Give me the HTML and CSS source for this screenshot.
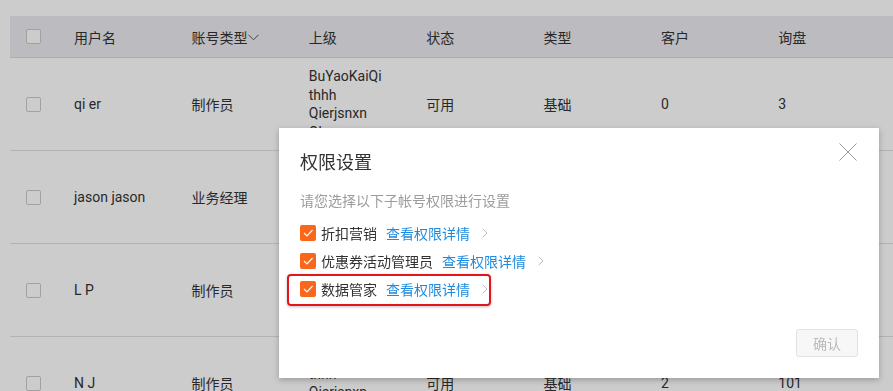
FILE: index.html
```html
<!DOCTYPE html>
<html lang="zh-CN">
<head>
  <meta charset="UTF-8">
  <meta name="viewport" content="width=device-width, initial-scale=1.0">
  <title>子帐号管理</title>
  <link rel="stylesheet" href="styles.css">
</head>
<body>
  <div class="page">
    <div class="table">
      <div class="row head">
        <div class="cell"><span class="box"></span></div>
        <div class="cell">用户名</div>
        <div class="cell">账号类型<svg class="sort" width="11" height="7" viewBox="0 0 11 7"><path d="M0.5 0.8 L5.5 5.8 L10.5 0.8" fill="none" stroke="#555" stroke-width="1"/></svg></div>
        <div class="cell">上级</div>
        <div class="cell">状态</div>
        <div class="cell">类型</div>
        <div class="cell">客户</div>
        <div class="cell">询盘</div>
        <div class="cell"></div>
      </div>

      <div class="row">
        <div class="cell"><span class="box"></span></div>
        <div class="cell">qi er</div>
        <div class="cell">制作员</div>
        <div class="cell lines">BuYaoKaiQi<br>thhh<br>Qierjsnxn<br>Qkw</div>
        <div class="cell">可用</div>
        <div class="cell">基础</div>
        <div class="cell">0</div>
        <div class="cell">3</div>
        <div class="cell"></div>
      </div>

      <!-- rows 2 and 3 sit under the dialog, only the first columns show -->
      <div class="row">
        <div class="cell"><span class="box"></span></div>
        <div class="cell">jason jason</div>
        <div class="cell">业务经理</div>
        <div class="cell"></div>
        <div class="cell"></div>
        <div class="cell"></div>
        <div class="cell"></div>
        <div class="cell"></div>
        <div class="cell"></div>
      </div>

      <div class="row">
        <div class="cell"><span class="box"></span></div>
        <div class="cell">L P</div>
        <div class="cell">制作员</div>
        <div class="cell"></div>
        <div class="cell"></div>
        <div class="cell"></div>
        <div class="cell"></div>
        <div class="cell"></div>
        <div class="cell"></div>
      </div>

      <div class="row">
        <div class="cell"><span class="box"></span></div>
        <div class="cell">N J</div>
        <div class="cell">制作员</div>
        <div class="cell lines">BuYaoKaiQi<br>thhh<br>Qierjsnxn<br>Qkw</div>
        <div class="cell">可用</div>
        <div class="cell">基础</div>
        <div class="cell">2</div>
        <div class="cell">101</div>
        <div class="cell"></div>
      </div>
    </div>
  </div>

  <div class="mask"></div>

  <div class="modal">
    <svg class="close" width="18" height="18" viewBox="0 0 18 18"><path d="M0.5 0.5 L17.5 17.5 M17.5 0.5 L0.5 17.5" stroke="#9a9a9a" stroke-width="1" fill="none"/></svg>
    <h3 class="modal-title">权限设置</h3>
    <p class="modal-tip">请您选择以下子帐号权限进行设置</p>
    <ul class="perms">
      <li class="perm">
        <span class="check"><svg width="16" height="16" viewBox="0 0 16 16"><path d="M4 8 L7 11 L12.5 5" fill="none" stroke="#fff" stroke-width="1.2"/></svg></span>
        <span class="perm-name">折扣营销</span>
        <a class="perm-link">查看权限详情</a>
        <svg class="arrow" width="6" height="10" viewBox="0 0 6 10"><path d="M0.7 0.7 L5 5 L0.7 9.3" fill="none" stroke="#bdbdbd" stroke-width="1"/></svg>
      </li>
      <li class="perm">
        <span class="check"><svg width="16" height="16" viewBox="0 0 16 16"><path d="M4 8 L7 11 L12.5 5" fill="none" stroke="#fff" stroke-width="1.2"/></svg></span>
        <span class="perm-name">优惠券活动管理员</span>
        <a class="perm-link">查看权限详情</a>
        <svg class="arrow" width="6" height="10" viewBox="0 0 6 10"><path d="M0.7 0.7 L5 5 L0.7 9.3" fill="none" stroke="#bdbdbd" stroke-width="1"/></svg>
      </li>
      <li class="perm marked">
        <span class="check"><svg width="16" height="16" viewBox="0 0 16 16"><path d="M4 8 L7 11 L12.5 5" fill="none" stroke="#fff" stroke-width="1.2"/></svg></span>
        <span class="perm-name">数据管家</span>
        <a class="perm-link">查看权限详情</a>
        <svg class="arrow" width="6" height="10" viewBox="0 0 6 10"><path d="M0.7 0.7 L5 5 L0.7 9.3" fill="none" stroke="#bdbdbd" stroke-width="1"/></svg>
      </li>
    </ul>
    <div class="modal-foot">
      <button class="btn-ok" disabled>确认</button>
    </div>
  </div>
</body>
</html>
```

FILE: styles.css
```css
body {
  margin: 0;
  font-family: Roboto, "Noto Sans CJK SC", sans-serif;
  font-size: 14px;
  color: #333;
  background: #fff;
  overflow: hidden;
}
.page {
  padding: 16px 0 0 10px;
}
.table {
  width: 900px;
}
.row {
  display: grid;
  grid-template-columns: 48px repeat(7, 117.4px) 1fr;
  align-items: center;
  min-height: 92px;
  border-bottom: 1px solid #e0e0e0;
}
.row.head {
  min-height: 41px;
  background: #ebecf1;
  border-bottom-color: #d6d7dc;
}
.cell {
  padding-left: 16px;
  white-space: nowrap;
  display: flex;
  align-items: center;
}
.cell.lines {
  display: block;
  line-height: 18.5px;
}
.sort {
  margin-left: 1px;
  margin-top: 1px;
}
.box {
  display: inline-block;
  width: 13px;
  height: 13px;
  border: 1px solid #cacaca;
  border-radius: 2px;
  background: #fff;
}
.mask {
  position: fixed;
  inset: 0;
  background: rgba(0, 0, 0, 0.2);
}

/* dialog */
.modal {
  position: fixed;
  left: 279px;
  top: 128px;
  width: 600px;
  height: 250px;
  box-sizing: border-box;
  padding: 21px;
  background: #fff;
  box-shadow: 0 2px 6px rgba(0, 0, 0, 0.25);
  display: flex;
  flex-direction: column;
  font-family: "Noto Sans CJK SC", Roboto, sans-serif;
}
.close {
  position: absolute;
  right: 22px;
  top: 15px;
}
.modal-title {
  margin: 0;
  font-size: 18px;
  font-weight: normal;
  line-height: 24px;
  color: #333;
}
.modal-tip {
  margin: 17px 0 9px;
  line-height: 20px;
  color: #9c9c9c;
}
.perms {
  list-style: none;
  margin: 0;
  padding: 0;
}
.perm {
  position: relative;
  display: flex;
  align-items: center;
  height: 28px;
}
.check {
  width: 16px;
  height: 16px;
  border-radius: 2px;
  background: #fa661a;
  display: flex;
}
.perm-name {
  margin-left: 5px;
  color: #333;
}
.perm-link {
  margin-left: 9px;
  color: #1d8be0;
}
.arrow {
  margin-left: 12px;
}
.perm.marked::after {
  content: "";
  position: absolute;
  left: -13px;
  top: -1px;
  width: 200px;
  height: 28px;
  border: 2px solid #e3151b;
  border-radius: 4px;
  box-shadow: 0 1px 3px rgba(0, 0, 0, 0.25);
}
.modal-foot {
  margin-top: auto;
  display: flex;
  justify-content: flex-end;
}
.btn-ok {
  width: 62px;
  height: 28px;
  padding: 0;
  font-family: inherit;
  font-size: 14px;
  color: #bbb;
  background: #f7f7f8;
  border: 1px solid #e2e2e4;
  border-radius: 3px;
}
```
